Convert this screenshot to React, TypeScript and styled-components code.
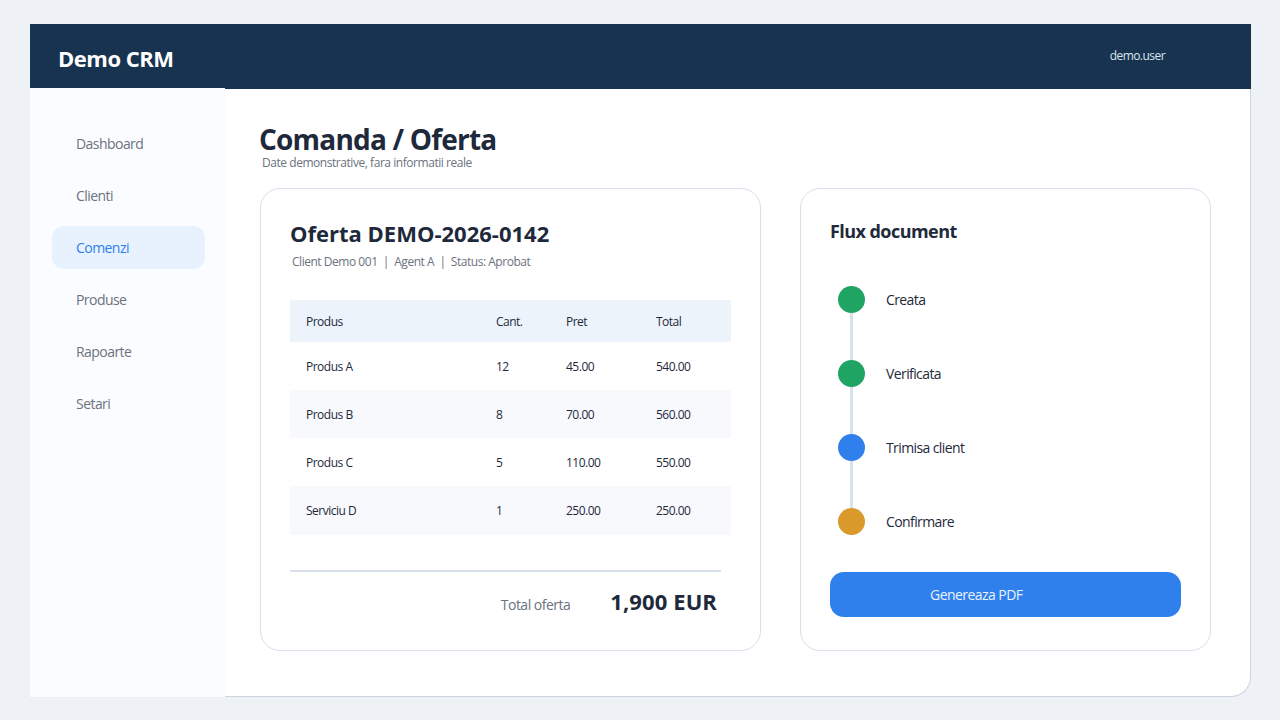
import styled, { createGlobalStyle } from "styled-components";

const Global = createGlobalStyle`
  html, body {
    margin: 0;
    padding: 0;
    background: #eef2f6;
  }
  body {
    font-family: "Open Sans", "Noto Sans", "Liberation Sans", sans-serif;
    color: #1e293b;
  }
  * {
    box-sizing: border-box;
  }
`;

const Page = styled.div`
  width: 1280px;
  height: 720px;
  padding: 24px 29px 23px 30px;
`;

const Frame = styled.div`
  height: 673px;
  display: flex;
  flex-direction: column;
  background: #fff;
  border-right: 1px solid #cbd5e1;
  border-bottom: 1px solid #cbd5e1;
  border-bottom-right-radius: 20px;
`;

const Header = styled.header`
  height: 65px;
  flex: none;
  margin-right: -1px;
  display: flex;
  align-items: center;
  justify-content: space-between;
  padding: 0 86px 2px 28px;
  background: #18334f;
  color: #fff;
`;

const Brand = styled.div`
  font-size: 22px;
  font-weight: 700;
  letter-spacing: -0.5px;
  margin-top: 5px;
`;

const User = styled.div`
  font-size: 12px;
  letter-spacing: -0.55px;
  color: #dbe5f0;
`;

const Body = styled.div`
  flex: 1;
  display: flex;
  min-height: 0;
`;

const Sidebar = styled.nav`
  width: 195px;
  flex: none;
  margin-top: -1px;
  margin-bottom: -1px;
  padding: 34px 20px 0 22px;
  display: flex;
  flex-direction: column;
  gap: 9px;
  background: #fbfcff;
`;

const NavItem = styled.div<{ $active?: boolean }>`
  height: 43px;
  display: flex;
  align-items: center;
  padding: 0 24px;
  border-radius: 12px;
  font-size: 14px;
  letter-spacing: -0.55px;
  background: ${(p) => (p.$active ? "#e8f1fe" : "transparent")};
  color: ${(p) => (p.$active ? "#2f80ed" : "#6b7280")};
`;

const Main = styled.main`
  flex: 1;
  padding: 32px 39px 0 35px;
`;

const Title = styled.h1`
  margin: 0 0 0 -1px;
  font-size: 28px;
  line-height: 36px;
  font-weight: 700;
  letter-spacing: -0.8px;
  color: #1e293b;
`;

const Subtitle = styled.p`
  margin: -2px 0 17px 2px;
  font-size: 12px;
  line-height: 16px;
  letter-spacing: -0.45px;
  color: #6b7280;
`;

const Columns = styled.div`
  display: flex;
  gap: 39px;
`;

const Card = styled.section<{ $width: number }>`
  width: ${(p) => p.$width}px;
  height: 463px;
  flex: none;
  padding: 28px 29px;
  border: 1px solid #d8e0ec;
  border-radius: 20px;
  background: #fff;
`;

const OfferTitle = styled.h2`
  margin: 0;
  font-size: 22px;
  line-height: 32px;
  font-weight: 700;
  letter-spacing: 0;
`;

const Meta = styled.div`
  margin: 5px 0 0 2px;
  height: 46px;
  font-size: 12px;
  line-height: 16px;
  letter-spacing: -0.47px;
  color: #6b7280;
`;

const Row = styled.div<{ $bg?: string; $h: number }>`
  width: 441px;
  height: ${(p) => p.$h}px;
  display: grid;
  grid-template-columns: 190px 70px 90px 1fr;
  align-items: center;
  padding-left: 16px;
  font-size: 12px;
  letter-spacing: -0.5px;
  color: #1e293b;
  background: ${(p) => p.$bg || "transparent"};
`;

const Divider = styled.div`
  width: 431px;
  height: 2px;
  margin-top: 35px;
  background: #d8e0ec;
`;

const TotalRow = styled.div`
  width: 427px;
  display: flex;
  justify-content: flex-end;
  align-items: baseline;
  gap: 40px;
  margin-top: 14px;
`;

const TotalLabel = styled.span`
  font-size: 14px;
  letter-spacing: -0.5px;
  color: #6b7280;
`;

const TotalValue = styled.span`
  font-size: 22px;
  font-weight: 700;
  letter-spacing: 0.1px;
`;

const FlowTitle = styled.h3`
  margin: 0 0 41px;
  font-size: 18px;
  line-height: 28px;
  font-weight: 700;
  letter-spacing: -0.55px;
`;

const Step = styled.div<{ $line: boolean }>`
  position: relative;
  height: 74px;
  display: flex;
  align-items: flex-start;
  gap: 21px;
  padding-left: 8px;

  &::after {
    content: ${(p) => (p.$line ? '""' : "none")};
    position: absolute;
    left: 20px;
    top: 27px;
    width: 3px;
    height: 47px;
    background: #d8e0ec;
  }
`;

const Dot = styled.span<{ $color: string }>`
  width: 27px;
  height: 27px;
  flex: none;
  border-radius: 50%;
  background: ${(p) => p.$color};
`;

const StepLabel = styled.span`
  font-size: 14px;
  line-height: 27px;
  letter-spacing: -0.6px;
  color: #1e293b;
`;

const PdfButton = styled.button`
  display: block;
  width: 351px;
  height: 45px;
  margin-top: -10px;
  padding: 0 0 0 100px;
  border: 0;
  border-radius: 14px;
  text-align: left;
  font-family: inherit;
  font-size: 14px;
  letter-spacing: -0.55px;
  color: #eaf2fd;
  background: #2f80ed;
`;

const nav = ["Dashboard", "Clienti", "Comenzi", "Produse", "Rapoarte", "Setari"];

const items = [
  ["Produs A", "12", "45.00", "540.00"],
  ["Produs B", "8", "70.00", "560.00"],
  ["Produs C", "5", "110.00", "550.00"],
  ["Serviciu D", "1", "250.00", "250.00"],
];

const steps = [
  { label: "Creata", color: "#20a464" },
  { label: "Verificata", color: "#20a464" },
  { label: "Trimisa client", color: "#2f80ed" },
  { label: "Confirmare", color: "#d99a2b" },
];

export default function App() {
  return (
    <Page>
      <Global />
      <Frame>
        <Header>
          <Brand>Demo CRM</Brand>
          <User>demo.user</User>
        </Header>
        <Body>
          <Sidebar>
            {nav.map((n) => (
              <NavItem key={n} $active={n === "Comenzi"}>
                {n}
              </NavItem>
            ))}
          </Sidebar>
          <Main>
            <Title>Comanda / Oferta</Title>
            <Subtitle>Date demonstrative, fara informatii reale</Subtitle>
            <Columns>
              <Card $width={501}>
                <OfferTitle>Oferta DEMO-2026-0142</OfferTitle>
                <Meta>Client Demo 001&nbsp; |&nbsp; Agent A&nbsp; |&nbsp; Status: Aprobat</Meta>
                <Row $h={42} $bg="#edf3fb">
                  <span>Produs</span>
                  <span>Cant.</span>
                  <span>Pret</span>
                  <span>Total</span>
                </Row>
                {items.map((it, i) => (
                  <Row key={it[0]} $h={i === 3 ? 49 : 48} $bg={i % 2 ? "#f7f9fd" : undefined}>
                    {it.map((c) => (
                      <span key={c}>{c}</span>
                    ))}
                  </Row>
                ))}
                <Divider />
                <TotalRow>
                  <TotalLabel>Total oferta</TotalLabel>
                  <TotalValue>1,900 EUR</TotalValue>
                </TotalRow>
              </Card>
              <Card $width={411}>
                <FlowTitle>Flux document</FlowTitle>
                {steps.map((s, i) => (
                  <Step key={s.label} $line={i < steps.length - 1}>
                    <Dot $color={s.color} />
                    <StepLabel>{s.label}</StepLabel>
                  </Step>
                ))}
                <PdfButton>Genereaza PDF</PdfButton>
              </Card>
            </Columns>
          </Main>
        </Body>
      </Frame>
    </Page>
  );
}
